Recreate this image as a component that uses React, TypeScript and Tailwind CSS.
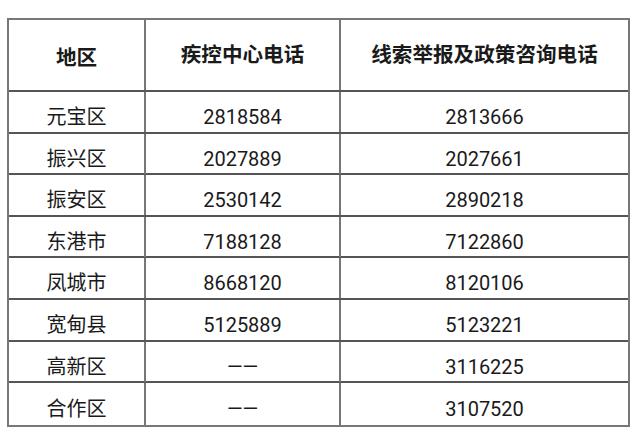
const rows: [string, string, string][] = [
  ["元宝区", "2818584", "2813666"],
  ["振兴区", "2027889", "2027661"],
  ["振安区", "2530142", "2890218"],
  ["东港市", "7188128", "7122860"],
  ["凤城市", "8668120", "8120106"],
  ["宽甸县", "5125889", "5123221"],
  ["高新区", "——", "3116225"],
  ["合作区", "——", "3107520"],
];

const font = { fontFamily: 'Roboto, "Noto Sans CJK SC", sans-serif' };

export default function App() {
  return (
    <div className="w-[640px] h-[443px] bg-white pt-[18px] pl-[7px] text-[#1a1a1a]" style={font}>
      <div className="w-[623px] border-2 border-[#777]">
        <div className="grid grid-cols-[135px_195px_1fr] h-[72px] border-b-2 border-[#555] text-[20.6px] font-bold">
          <div className="flex items-center justify-center pt-[7px]">地区</div>
          <div className="flex items-center justify-center border-l-2 border-[#777]">疾控中心电话</div>
          <div className="flex items-center justify-center border-l-2 border-[#777]">线索举报及政策咨询电话</div>
        </div>
        {rows.map((r, i) => (
          <div
            key={r[0]}
            className={`grid grid-cols-[135px_195px_1fr] h-[41.6px] text-[20px] ${i < rows.length - 1 ? "border-b-2 border-[#555]" : ""}`}
          >
            <div className="flex items-center justify-center pt-[10px]">{r[0]}</div>
            <div className="flex items-center justify-center pt-[10px] border-l-2 border-[#777]">{r[1]}</div>
            <div className="flex items-center justify-center pt-[10px] border-l-2 border-[#777]">{r[2]}</div>
          </div>
        ))}
      </div>
    </div>
  );
}
